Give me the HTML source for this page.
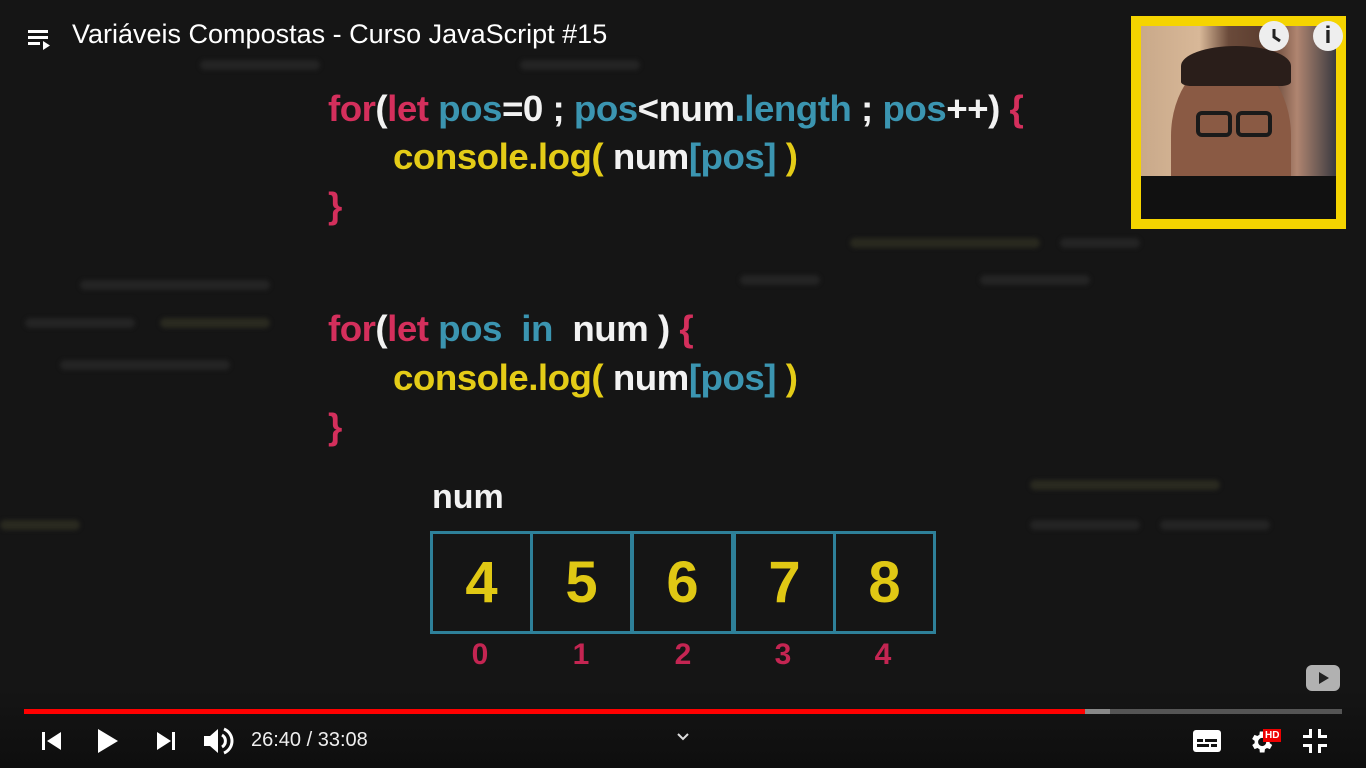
<!DOCTYPE html>
<html><head><meta charset="utf-8"><style>
body{margin:0;width:1366px;height:768px;overflow:hidden;background:#151515;font-family:"Liberation Sans",sans-serif;position:relative}
.bg{position:absolute;height:10px;border-radius:5px;background:#242424;filter:blur(2px)}
.code{position:absolute;font-size:36px;font-weight:bold;line-height:40px;white-space:pre;transform:scaleX(1.02);transform-origin:left center;letter-spacing:-0.5px}
.p{color:#d42f5c}.b{color:#3b95b1}.w{color:#f2f2f2}.y{color:#e4cc17}
.cell{position:absolute;top:531px;height:97px;width:97px;border:3px solid #2e8099;color:#e0c814;font-size:58px;font-weight:bold;text-align:center;line-height:97px}
.idx{position:absolute;top:638px;width:100px;text-align:center;color:#c42552;font-size:30px;font-weight:bold}
.ctl{position:absolute;fill:#fff}
</style></head><body>
<div class="bg" style="left:80px;top:280px;width:190px"></div>
<div class="bg" style="left:25px;top:318px;width:110px"></div>
<div class="bg" style="left:160px;top:318px;width:110px;background:#2a2a20"></div>
<div class="bg" style="left:60px;top:360px;width:170px"></div>
<div class="bg" style="left:850px;top:238px;width:190px;background:#29291f"></div>
<div class="bg" style="left:1060px;top:238px;width:80px"></div>
<div class="bg" style="left:740px;top:275px;width:80px"></div>
<div class="bg" style="left:980px;top:275px;width:110px"></div>
<div class="bg" style="left:1030px;top:480px;width:190px;background:#2a2a20"></div>
<div class="bg" style="left:0;top:520px;width:80px;background:#2a2a20"></div>
<div class="bg" style="left:1030px;top:520px;width:110px"></div>
<div class="bg" style="left:1160px;top:520px;width:110px"></div>
<div class="bg" style="left:200px;top:60px;width:120px"></div>
<div class="bg" style="left:520px;top:60px;width:120px"></div>

<svg class="ctl" style="left:28px;top:28px" width="26" height="24" viewBox="0 0 26 24"><rect x="0" y="2" width="20" height="3"/><rect x="0" y="8" width="20" height="3"/><rect x="0" y="14" width="12" height="3"/><path d="M15 13v9l7-4.5z"/></svg>
<div style="position:absolute;left:72px;top:19px;color:#fff;font-size:27px">Variáveis Compostas - Curso JavaScript #15</div>

<div class="code" style="left:328px;top:89px"><span class="p">for</span><span class="w">(</span><span class="p">let </span><span class="b">pos</span><span class="w">=0 ; </span><span class="b">pos</span><span class="w">&lt;num</span><span class="b">.length</span><span class="w"> ; </span><span class="b">pos</span><span class="w">++) </span><span class="p">{</span></div>
<div class="code" style="left:393px;top:137px"><span class="y">console.log(</span><span class="w"> num</span><span class="b">[pos]</span><span class="y"> )</span></div>
<div class="code p" style="left:328px;top:186px">}</div>
<div class="code" style="left:328px;top:309px"><span class="p">for</span><span class="w">(</span><span class="p">let </span><span class="b">pos  in  </span><span class="w">num ) </span><span class="p">{</span></div>
<div class="code" style="left:393px;top:358px"><span class="y">console.log(</span><span class="w"> num</span><span class="b">[pos]</span><span class="y"> )</span></div>
<div class="code p" style="left:328px;top:407px">}</div>

<div style="position:absolute;left:432px;top:478px;color:#f2f2f2;font-size:34px;font-weight:bold">num</div>
<div class="cell" style="left:430px">4</div>
<div class="cell" style="left:530px">5</div>
<div class="cell" style="left:631px">6</div>
<div class="cell" style="left:733px">7</div>
<div class="cell" style="left:833px">8</div>
<div class="idx" style="left:430px">0</div>
<div class="idx" style="left:531px">1</div>
<div class="idx" style="left:633px">2</div>
<div class="idx" style="left:733px">3</div>
<div class="idx" style="left:833px">4</div>

<div style="position:absolute;left:1131px;top:16px;width:195px;height:193px;border:10px solid #f5d400;background:linear-gradient(90deg,#c9a98a 0%,#d8b898 30%,#6a4a3a 45%,#5a3c2e 65%,#b08570 80%,#3a3a40 100%)">
 <div style="position:absolute;left:30px;top:30px;width:120px;height:160px;border-radius:50% 50% 20% 20%;background:#8a5a44"></div>
 <div style="position:absolute;left:0;top:150px;width:195px;height:43px;background:#111"></div>
 <div style="position:absolute;left:40px;top:20px;width:110px;height:40px;border-radius:50% 50% 10% 10%;background:#2a1e1a"></div>
 <div style="position:absolute;left:55px;top:85px;width:36px;height:26px;border:4px solid #1a1a1a;border-radius:6px;box-sizing:border-box"></div>
 <div style="position:absolute;left:95px;top:85px;width:36px;height:26px;border:4px solid #1a1a1a;border-radius:6px;box-sizing:border-box"></div>
</div>
<div style="position:absolute;left:1259px;top:21px;width:30px;height:30px;border-radius:50%;background:#eee"></div>
<svg style="position:absolute;left:1259px;top:21px" width="30" height="30"><path d="M15 8v8l6 4" stroke="#222" stroke-width="3" fill="none"/></svg>
<div style="position:absolute;left:1313px;top:21px;width:30px;height:30px;border-radius:50%;background:#eee;color:#222;font-weight:bold;font-size:24px;text-align:center;line-height:30px">i</div>

<svg style="position:absolute;left:1304px;top:663px" width="38" height="30" viewBox="0 0 38 30"><path d="M8 2h22a6 6 0 0 1 6 6v14a6 6 0 0 1-6 6H8a6 6 0 0 1-6-6V8a6 6 0 0 1 6-6z" fill="#ccc" opacity=".85"/><path d="M15 9v12l10-6z" fill="#222"/></svg>

<div style="position:absolute;left:0;top:690px;width:1366px;height:78px;background:linear-gradient(#15151500,#0e0e0e)"></div>
<div style="position:absolute;left:24px;top:709px;width:1318px;height:5px;background:#555"></div>
<div style="position:absolute;left:24px;top:709px;width:1086px;height:5px;background:#888"></div>
<div style="position:absolute;left:24px;top:709px;width:1061px;height:5px;background:#f00"></div>

<svg class="ctl" style="left:40px;top:729px" width="24" height="24" viewBox="0 0 24 24"><rect x="2" y="3" width="3" height="18"/><path d="M21 3v18L7 12z"/></svg>
<svg class="ctl" style="left:94px;top:727px" width="28" height="28" viewBox="0 0 28 28"><path d="M4 2v24l20-12z"/></svg>
<svg class="ctl" style="left:154px;top:729px" width="24" height="24" viewBox="0 0 24 24"><path d="M3 3v18l14-9z"/><rect x="18" y="3" width="3" height="18"/></svg>
<svg class="ctl" style="left:202px;top:726px" width="32" height="30" viewBox="0 0 32 30"><path d="M2 10h6l8-7v24l-8-7H2z"/><path d="M20 9a7 7 0 0 1 0 12" stroke="#fff" stroke-width="3" fill="none"/><path d="M22 3a13 13 0 0 1 0 24" stroke="#fff" stroke-width="3" fill="none"/></svg>
<div style="position:absolute;left:251px;top:729px;color:#eee;font-size:20px">26:40 / 33:08</div>
<svg style="position:absolute;left:676px;top:732px" width="14" height="10"><path d="M2 2l5 5 5-5" stroke="#ddd" stroke-width="2" fill="none"/></svg>

<svg class="ctl" style="left:1192px;top:728px" width="30" height="26" viewBox="0 0 30 26"><rect x="1" y="2" width="28" height="22" rx="3"/><rect x="5" y="11" width="6" height="3" fill="#111"/><rect x="13" y="11" width="12" height="3" fill="#111"/><rect x="5" y="16" width="12" height="3" fill="#111"/><rect x="19" y="16" width="6" height="3" fill="#111"/></svg>
<svg class="ctl" style="left:1247px;top:728px" width="28" height="28" viewBox="0 0 24 24"><path d="M19.4 13a7.5 7.5 0 0 0 0-2l2.1-1.6-2-3.5-2.5 1a7 7 0 0 0-1.7-1L15 3h-4l-.4 2.9a7 7 0 0 0-1.7 1l-2.5-1-2 3.5L6.6 11a7.5 7.5 0 0 0 0 2l-2.1 1.6 2 3.5 2.5-1a7 7 0 0 0 1.7 1L11 21h4l.4-2.9a7 7 0 0 0 1.7-1l2.5 1 2-3.5zM13 15.5a3.5 3.5 0 1 1 0-7 3.5 3.5 0 0 1 0 7z"/></svg>
<div style="position:absolute;left:1263px;top:729px;background:#e00;color:#fff;font-size:10px;font-weight:bold;padding:0 2px;line-height:13px">HD</div>
<svg class="ctl" style="left:1302px;top:728px" width="26" height="26" viewBox="0 0 26 26"><path d="M7 1h3v9H1V7h6zM16 1h3v6h6v3h-9zM1 16h9v9H7v-6H1zM16 16h9v3h-6v6h-3z"/></svg>
</body></html>
